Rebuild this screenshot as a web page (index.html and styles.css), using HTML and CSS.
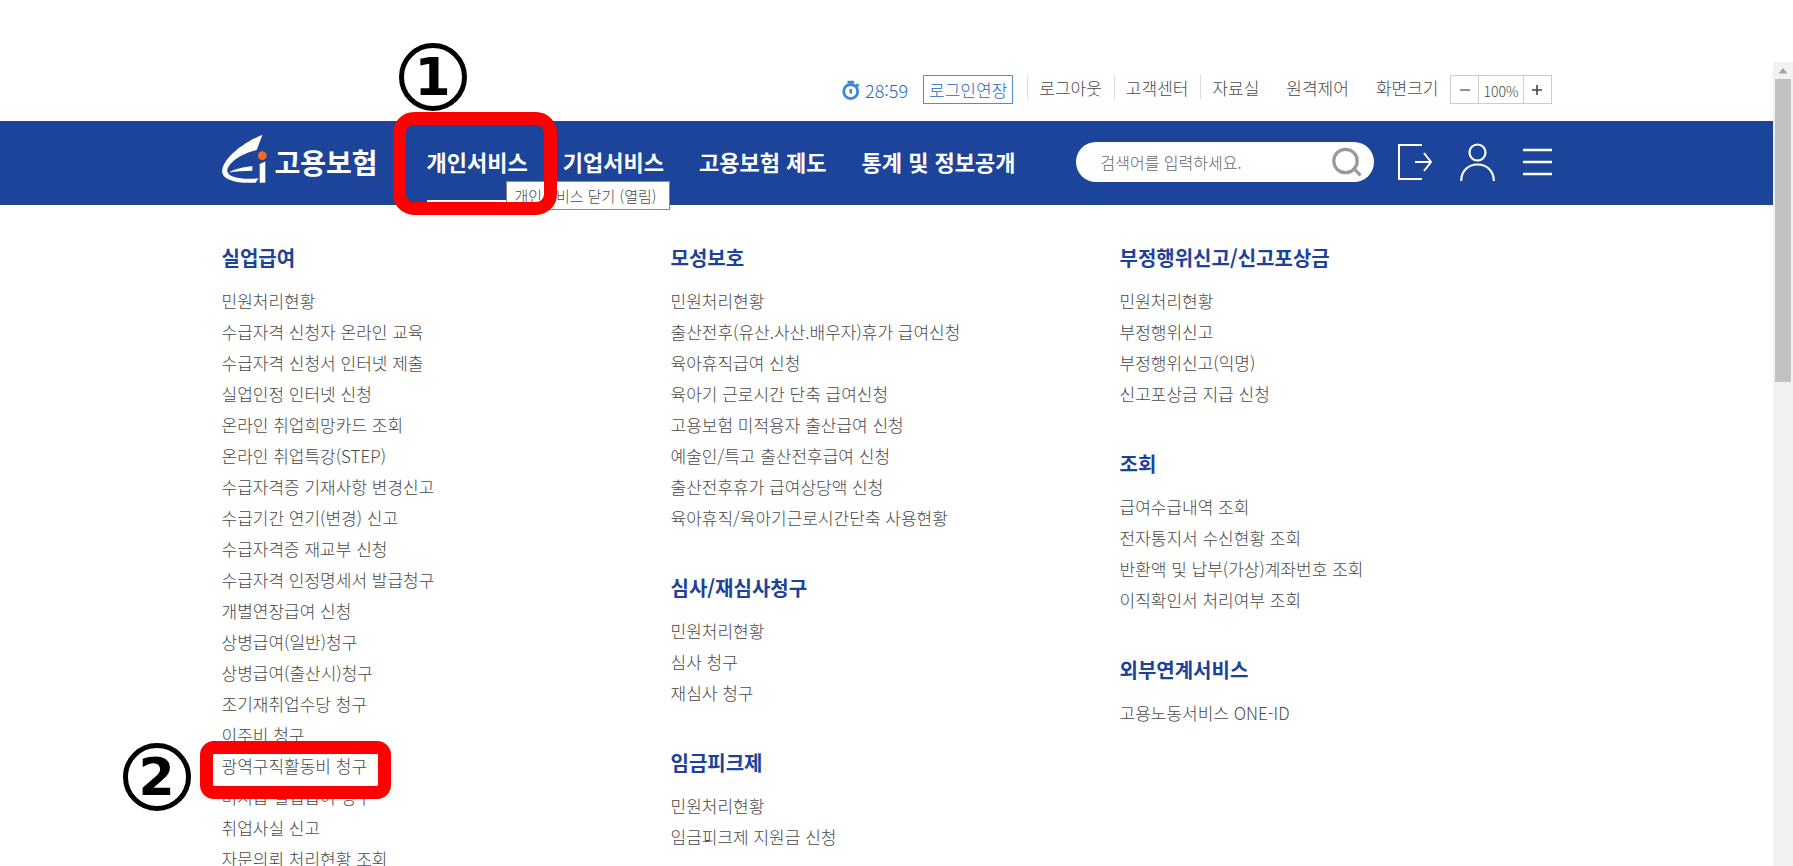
FILE: index.html
```html
<!DOCTYPE html>
<html lang="ko">
<head>
<meta charset="utf-8">
<title>고용보험</title>
<link rel="stylesheet" href="styles.css">
</head>
<body>
<div class="frame">
  <div class="page">
    <div class="topbar wrap">
      <span class="timer">
        <svg width="18" height="20" viewBox="0 0 18 20" fill="none" stroke="#3b86d8" aria-hidden="true">
          <path d="M5.500 2h6.500" stroke-width="2.500"/>
          <path d="M14 4.500l3 1.500" stroke-width="2.500"/>
          <circle cx="8.700" cy="11.500" r="7" stroke-width="2.800"/>
          <path d="M8.700 9v4.500" stroke-width="2.500"/>
        </svg>
        <span>28:59</span>
      </span>
      <button class="extend" type="button">로그인연장</button>
      <ul class="util">
        <li><a href="#">로그아웃</a></li>
        <li><a href="#">고객센터</a></li>
        <li><a href="#">자료실</a></li>
      </ul>
      <a class="remote" href="#">원격제어</a>
      <span class="size-label" id="size-label">화면크기</span>
      <div class="sizer" role="group" aria-labelledby="size-label">
        <button type="button" aria-label="축소"><svg width="10" height="10" viewBox="0 0 10 10" stroke="#555" stroke-width="1.300"><path d="M0 5h10"/></svg></button>
        <span class="percent">100%</span>
        <button type="button" aria-label="확대"><svg width="10" height="10" viewBox="0 0 10 10" stroke="#444" stroke-width="1.600"><path d="M0 5h10M5 0v10"/></svg></button>
      </div>
    </div>

    <header class="header">
      <div class="bar wrap">
        <a class="logo" href="#">
          <svg width="46" height="56" viewBox="0 0 46 56" aria-hidden="true">
            <path fill="#fff" d="M40.500 .700C27 6 3 21 .200 36C-1 44.500 11 49.500 33.500 48.800L36.500 44.300C22 45.500 6.500 44.500 5.300 37C5.500 29 19 19.500 34.700 16Z"/>
            <path fill="#fff" d="M7 38.500C13 34.500 22 33 30.300 32V36.800C22 36.800 14 37.500 7 38.500Z"/>
            <circle cx="40.300" cy="21.700" r="4.400" fill="#f26a2a"/>
            <path fill="#fff" d="M37.700 30L43.300 27.500V48.800H37.700Z"/>
          </svg>
          <span class="logo-text">고용보험</span>
        </a>
        <nav>
          <ul class="nav">
            <li class="active">
              <a href="#">개인서비스</a>
              <span class="tooltip" role="tooltip">개인서비스 닫기 (열림)</span>
              <span class="ring ring-nav"></span>
              <span class="step step-one">1</span>
            </li>
            <li><a href="#">기업서비스</a></li>
            <li><a href="#">고용보험 제도</a></li>
            <li><a href="#">통계 및 정보공개</a></li>
          </ul>
        </nav>
        <form class="search">
          <input type="text" placeholder="검색어를 입력하세요." aria-label="검색어">
          <button type="button" aria-label="검색">
            <svg width="30" height="30" viewBox="0 0 30 30" fill="none" stroke="#999" stroke-width="3.200"><circle cx="13.500" cy="14" r="11.700"/><path d="M21 20.500l7.500 8"/></svg>
          </button>
        </form>
        <div class="icons">
          <button type="button" aria-label="로그아웃"><svg width="34" height="38" viewBox="0 0 34 38" fill="none" stroke="#fff" stroke-width="2"><path d="M24 2H1v34h23M17 19h16M26 10l7 9-7 9"/></svg></button>
          <button type="button" aria-label="마이페이지"><svg width="35" height="38" viewBox="0 0 35 38" fill="none" stroke="#fff" stroke-width="2.200"><circle cx="17.500" cy="9.500" r="8"/><path d="M1.200 38c0-10 7-16.500 16.300-16.500S33.800 28 33.800 38"/></svg></button>
          <button type="button" aria-label="전체메뉴"><svg width="29" height="38" viewBox="0 0 29 38" stroke="#fff" stroke-width="2.500"><path d="M0 7h29M0 19h29M0 31h29"/></svg></button>
        </div>
      </div>
    </header>

    <main class="menu wrap">
      <div class="column">
        <section>
          <h2>실업급여</h2>
          <ul>
            <li><a href="#">민원처리현황</a></li>
            <li><a href="#">수급자격 신청자 온라인 교육</a></li>
            <li><a href="#">수급자격 신청서 인터넷 제출</a></li>
            <li><a href="#">실업인정 인터넷 신청</a></li>
            <li><a href="#">온라인 취업희망카드 조회</a></li>
            <li><a href="#">온라인 취업특강(STEP)</a></li>
            <li><a href="#">수급자격증 기재사항 변경신고</a></li>
            <li><a href="#">수급기간 연기(변경) 신고</a></li>
            <li><a href="#">수급자격증 재교부 신청</a></li>
            <li><a href="#">수급자격 인정명세서 발급청구</a></li>
            <li><a href="#">개별연장급여 신청</a></li>
            <li><a href="#">상병급여(일반)청구</a></li>
            <li><a href="#">상병급여(출산시)청구</a></li>
            <li><a href="#">조기재취업수당 청구</a></li>
            <li><a href="#">이주비 청구</a></li>
            <li class="marked">
              <a href="#">광역구직활동비 청구</a>
              <span class="ring ring-item"></span>
              <span class="step step-two">2</span>
            </li>
            <li><a href="#">미지급 실업급여 청구</a></li>
            <li><a href="#">취업사실 신고</a></li>
            <li><a href="#">자문의뢰 처리현황 조회</a></li>
          </ul>
        </section>
      </div>
      <div class="column">
        <section>
          <h2>모성보호</h2>
          <ul>
            <li><a href="#">민원처리현황</a></li>
            <li><a href="#">출산전후(유산.사산.배우자)휴가 급여신청</a></li>
            <li><a href="#">육아휴직급여 신청</a></li>
            <li><a href="#">육아기 근로시간 단축 급여신청</a></li>
            <li><a href="#">고용보험 미적용자 출산급여 신청</a></li>
            <li><a href="#">예술인/특고 출산전후급여 신청</a></li>
            <li><a href="#">출산전후휴가 급여상당액 신청</a></li>
            <li><a href="#">육아휴직/육아기근로시간단축 사용현황</a></li>
          </ul>
        </section>
        <section>
          <h2>심사/재심사청구</h2>
          <ul>
            <li><a href="#">민원처리현황</a></li>
            <li><a href="#">심사 청구</a></li>
            <li><a href="#">재심사 청구</a></li>
          </ul>
        </section>
        <section>
          <h2>임금피크제</h2>
          <ul>
            <li><a href="#">민원처리현황</a></li>
            <li><a href="#">임금피크제 지원금 신청</a></li>
          </ul>
        </section>
      </div>
      <div class="column">
        <section>
          <h2>부정행위신고/신고포상금</h2>
          <ul>
            <li><a href="#">민원처리현황</a></li>
            <li><a href="#">부정행위신고</a></li>
            <li><a href="#">부정행위신고(익명)</a></li>
            <li><a href="#">신고포상금 지급 신청</a></li>
          </ul>
        </section>
        <section>
          <h2>조회</h2>
          <ul>
            <li><a href="#">급여수급내역 조회</a></li>
            <li><a href="#">전자통지서 수신현황 조회</a></li>
            <li><a href="#">반환액 및 납부(가상)계좌번호 조회</a></li>
            <li><a href="#">이직확인서 처리여부 조회</a></li>
          </ul>
        </section>
        <section>
          <h2>외부연계서비스</h2>
          <ul>
            <li><a href="#">고용노동서비스 ONE-ID</a></li>
          </ul>
        </section>
      </div>
    </main>
  </div>
  <div class="scrollbar" aria-hidden="true">
    <svg width="20" height="17" viewBox="0 0 20 17"><path d="M5.500 11.500L10 6l4.500 5.500z" fill="#a3a3a3"/></svg>
    <div class="thumb"></div>
  </div>
</div>
</body>
</html>
```

FILE: styles.css
```css
* { box-sizing: border-box; }

body {
  margin: 0;
  height: 100vh;
  padding-top: 62px;
  overflow: hidden;
  background: #fff;
  color: #484848;
  font-family: "Noto Sans CJK KR", sans-serif;
  font-size: 17px;
  font-weight: 300;
  line-height: 31px;
}

a { color: inherit; text-decoration: none; white-space: nowrap; }
ul { margin: 0; padding: 0; list-style: none; }
button, input { font: inherit; color: inherit; border: 0; padding: 0; background: none; }
svg { display: block; }

.frame { display: flex; height: 100%; }
.page { flex: 1; min-width: 0; }
.wrap { width: 100%; max-width: 1330px; margin: 0 auto; }

/* utility bar */
.topbar {
  display: flex;
  justify-content: flex-end;
  padding: 13px 0 17px;
  line-height: 26px;
}
.timer { display: flex; align-items: center; gap: 5px; color: #2468c8; font-size: 18px; }
.extend {
  height: 29px;
  margin: 0 14px 0 15px;
  padding: 0 5px;
  border: 1px solid #4a90d9;
  color: #2468c8;
  line-height: 24px;
}
.util { display: flex; }
.util li { position: relative; padding: 0 12px; }
.util li::before {
  content: "";
  position: absolute;
  left: 0;
  top: 0;
  width: 1px;
  height: 24px;
  background: #ddd;
}
.util li:last-child { padding-right: 0; }
.remote { margin-left: 27px; }
.size-label { margin: 0 12px 0 27px; }
.sizer { display: flex; height: 29px; border: 1px solid #ccc; }
.sizer button { display: grid; place-items: center; width: 27px; }
.percent { padding: 2px 4px 0; border: solid #ccc; border-width: 0 1px; font-size: 14px; }

/* main header */
.header { background: #1c449b; color: #fff; }
.bar { display: flex; align-items: center; height: 84px; padding-bottom: 2px; }
.logo { display: flex; align-items: center; gap: 7px; }
.logo-text { font-size: 28px; font-weight: 700; line-height: 40px; }
.nav { display: flex; gap: 35px; margin-left: 49px; font-size: 22px; font-weight: 700; line-height: 38px; padding-bottom: 2px; }
.nav li { position: relative; }
.active::after {
  content: "";
  position: absolute;
  left: 0;
  right: 0;
  top: 58px;
  height: 2px;
  background: #fff;
}
.search {
  display: flex;
  align-items: center;
  width: 298px;
  height: 40px;
  margin-left: auto;
  padding: 0 12px 0 25px;
  border-radius: 20px;
  background: #fff;
}
.search input { flex: 1; min-width: 0; outline: 0; color: #484848; font-size: 16px; line-height: 24px; }
.search input::placeholder { color: #666; opacity: 1; }
.icons { display: flex; gap: 28px; margin-left: 24px; }

.tooltip {
  position: absolute;
  left: 79px;
  top: 39px;
  width: 164px;
  padding: 0 8px;
  border: 1px solid #888;
  background: #fff;
  color: #484848;
  font-size: 15px;
  font-weight: 300;
  line-height: 27px;
  white-space: nowrap;
  z-index: 1;
}

/* step markers */
.ring { position: absolute; border: 13px solid #f00; z-index: 2; }
.ring-nav { left: -34px; top: -30px; width: 164px; height: 103px; border-radius: 21px; }
.ring-item { left: -22px; top: -9px; width: 191px; height: 58px; border-radius: 14px; }
.step {
  position: absolute;
  width: 68px;
  height: 68px;
  border: 5px solid #000;
  border-radius: 50%;
  color: #000;
  font: 700 52px/58px "DejaVu Sans", sans-serif;
  text-align: center;
  z-index: 2;
}
.step-one { left: -28px; top: -99px; }
.step-two { left: -99px; top: -7px; }

/* opened menu */
.menu { display: grid; grid-template-columns: repeat(3, 1fr); column-gap: 17px; padding-top: 38px; }
.column { display: flex; flex-direction: column; gap: 40px; }
h2 { margin: 0 0 12px; color: #1c429a; font-size: 20px; font-weight: 700; line-height: 30px; }
.marked { position: relative; }

.scrollbar { display: flex; flex-direction: column; width: 20px; background: #f1f1f1; }
.thumb { height: 35vh; margin: 0 2px; background: #c1c1c1; }
```
